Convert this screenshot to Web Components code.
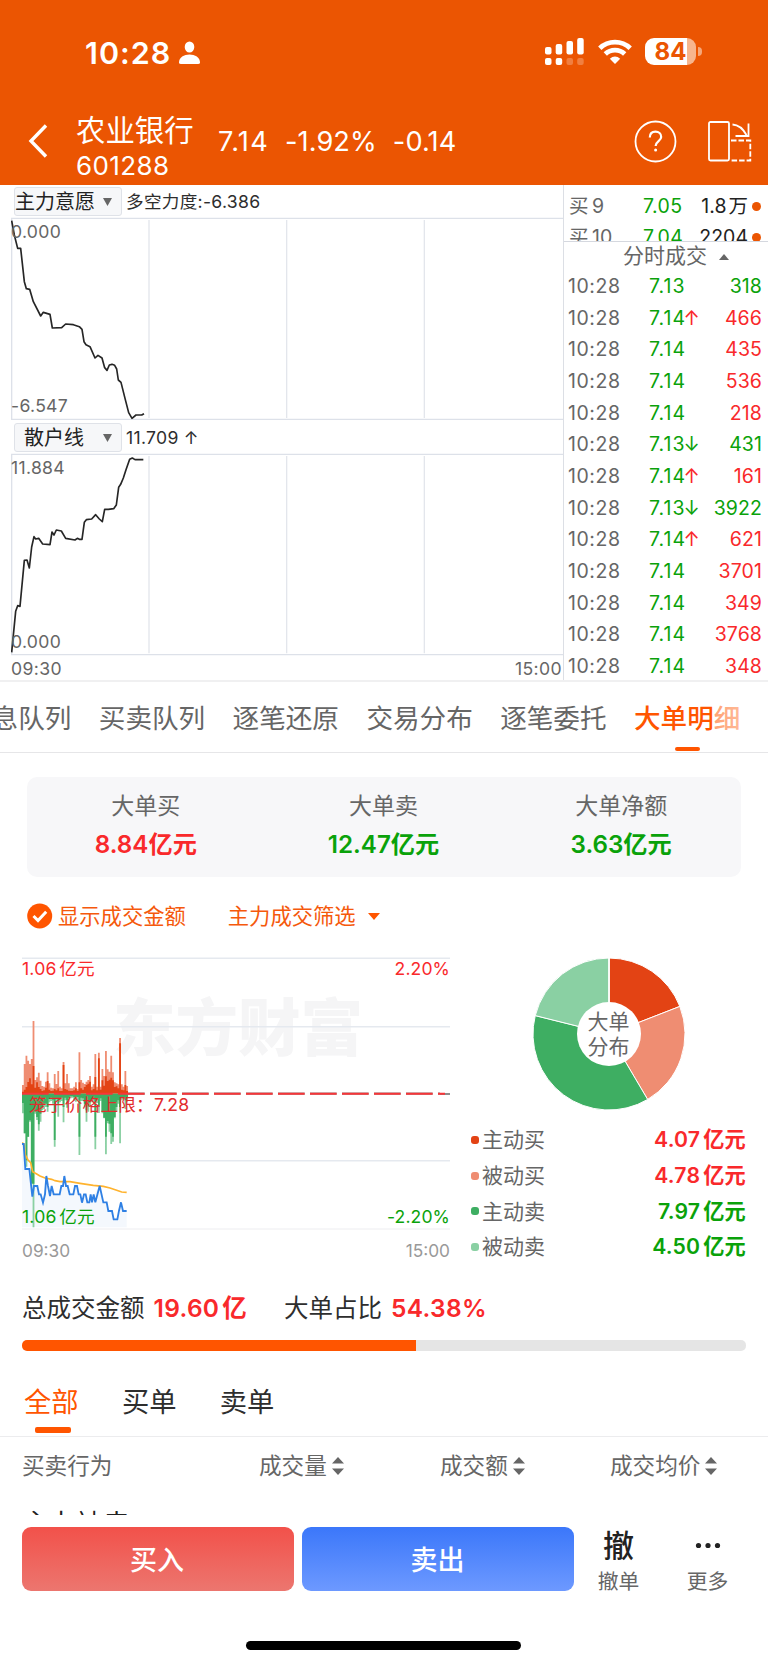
<!DOCTYPE html>
<html lang="zh-CN">
<head>
<meta charset="utf-8">
<title>农业银行 601288</title>
<style>
  :root {
    --orange: #eb5502;
    --accent: #ff5500;
    --red: #f9292b;
    --green: #0aa20a;
    --gray: #666;
    --dark: #2e2e2e;
  }
  body {
    margin: 0;
    width: 768px;
    height: 1665px;
    overflow: hidden;
    background: #fff;
    color: var(--gray);
    font-family: Inter, "Noto Sans CJK SC", sans-serif;
    white-space: nowrap;
  }
  .quote { display: flex; height: 495px; border-bottom: 2px solid #f0f0f1; }
  .flow { display: flex; height: 315px; }
</style>
</head>
<body>
<status-bar></status-bar>
<stock-header name="农业银行" code="601288"></stock-header>
<div class="quote">
  <indicator-panel></indicator-panel>
  <trade-list></trade-list>
</div>
<scroll-tabs></scroll-tabs>
<summary-card>
  <summary-item label="大单买" tone="red">8.84亿元</summary-item>
  <summary-item label="大单卖" tone="green">12.47亿元</summary-item>
  <summary-item label="大单净额" tone="green">3.63亿元</summary-item>
</summary-card>
<filter-row></filter-row>
<div class="flow">
  <money-chart></money-chart>
  <order-donut></order-donut>
</div>
<total-bar></total-bar>
<list-tabs></list-tabs>
<order-table></order-table>
<trade-footer></trade-footer>

<script>
const define = (name, render) => {
  customElements.define(name, class extends HTMLElement {
    constructor() {
      super();
      this.attachShadow({ mode: 'open' });
    }

    connectedCallback() {
      this.shadowRoot.innerHTML = render(this);
    }
  });
};

define('status-bar', () => `
  <style>
    :host { display: flex; height: 103px; background: var(--orange); color: #fff; }
    .time { margin: 33px 0 0 85px; width: 94px; height: 40px; font: 600 30.5px/40px Inter, sans-serif; letter-spacing: 1px; }
    .person { margin-top: 41px; }
    .right { margin: 38px 0 0 345px; display: flex; }
    .battery { margin-left: 13px; width: 51px; height: 27px; border-radius: 9px; color: var(--orange);
      background: linear-gradient(90deg, #fff 83%, #f7b58d 83%); font: 700 24px/28px Inter, sans-serif; text-align: center; }
    .knob { margin: 9px 0 0 2px; width: 4px; height: 9px; border-radius: 0 4px 4px 0; background: #f5a77a; }
  </style>
  <div class="time">10:28</div>
  <svg class="person" width="21" height="23" viewBox="0 0 21 23" fill="#fff">
    <ellipse cx="10.5" cy="6" rx="4.8" ry="5.6"/>
    <path d="M0 21.5C0 16.5 5 13.6 10.5 13.6S21 16.5 21 21.5Q21 23 19 23H2Q0 23 0 21.5Z"/>
  </svg>
  <div class="right">
    <svg width="39" height="27" viewBox="0 0 39 27" fill="#fff">
      <rect x="0" y="9" width="6.5" height="7.5" rx="2"/>
      <rect x="10.7" y="6" width="6.5" height="10.5" rx="2"/>
      <rect x="21.5" y="3" width="6.5" height="13.5" rx="2"/>
      <rect x="32.2" y="0" width="6.5" height="16.5" rx="2"/>
      <rect x="0" y="20" width="6.5" height="7" rx="2"/>
      <rect x="10.7" y="20" width="6.5" height="7" rx="2"/>
      <rect x="21.5" y="20" width="6.5" height="7" rx="2" opacity=".25"/>
      <rect x="32.2" y="20" width="6.5" height="7" rx="2" opacity=".25"/>
    </svg>
    <svg style="margin:1px 0 0 14px" width="34" height="26" viewBox="0 0 34 26" fill="none" stroke="#fff" stroke-width="4.8">
      <path d="M1.8 9.2A22 22 0 0 1 32.2 9.2"/>
      <path d="M7.3 15A14 14 0 0 1 26.7 15"/>
      <path d="M11.8 19.8Q17 15.2 22.2 19.8L17 25Z" fill="#fff" stroke="none"/>
    </svg>
    <div class="battery">84</div>
    <div class="knob"></div>
  </div>
`);

define('stock-header', el => `
  <style>
    :host { display: flex; height: 82px; background: var(--orange); color: #fff; }
    .back { margin: 21px 0 0 28px; }
    .title { margin-left: 28px; width: 142px; }
    .name { height: 40px; margin-top: 8px; font-size: 29.4px; line-height: 40px; }
    .code { height: 30px; font-size: 26px; line-height: 30px; letter-spacing: .4px; }
    .price { display: flex; gap: 16px; margin-top: 20px; width: 416px; font-size: 27.2px; line-height: 38px; height: 38px; letter-spacing: .1px; }
    .price span:first-of-type { letter-spacing: 1.2px; }
    .help { margin-top: 17px; }
    .rotate { margin: 18px 0 0 30px; }
  </style>
  <svg class="back" width="20" height="34" viewBox="0 0 20 34" fill="none" stroke="#fff" stroke-width="3.4"><path d="M18 1.5 3 17 18 32.5"/></svg>
  <div class="title">
    <div class="name">${el.getAttribute('name')}</div>
    <div class="code">${el.getAttribute('code')}</div>
  </div>
  <div class="price"><span>7.14</span><span>-1.92%</span><span>-0.14</span></div>
  <svg class="help" width="43" height="43" viewBox="0 0 43 43" fill="none" stroke="#fff" stroke-width="1.8">
    <circle cx="21.5" cy="21.5" r="20"/>
    <path d="M15.8 17.5C15.8 13.6 18.3 11.6 21.5 11.6S27.2 13.7 27.2 16.9C27.2 21 21.6 21.2 21.6 26" stroke-width="2.2"/>
    <circle cx="21.6" cy="30" r="1.5" fill="#fff" stroke="none"/>
  </svg>
  <svg class="rotate" width="46" height="42" viewBox="0 0 46 42" fill="none" stroke="#fff" stroke-width="1.8">
    <rect x="2" y="1" width="20" height="38.5" rx="1.5"/>
    <path d="M25.5 3.5Q34 4 39.5 14M41.5 2.5V15H28.5" stroke-width="1.8"/>
    <path d="M24 19.5H43.3V39.5H24" stroke-dasharray="5.5 2"/>
  </svg>
`);

/* one indicator: selector, latest value and its curve */
define('indicator-chart', el => {
  const at = name => el.getAttribute(name);
  const top = Number(at('top'));
  const bottom = Number(at('bottom'));
  return `
  <style>
    :host { display: block; position: relative; }
    .head { display: flex; height: 30px; padding: ${at('pad')}px 0 0 14px; align-items: flex-start; }
    .pick { box-sizing: border-box; width: 108px; height: 29px; border: 1px solid #dfe2e8; border-radius: 3px; background: #f6f7f9;
      display: flex; justify-content: space-between; padding: 0 9px 0 ${at('indent')}px; align-items: center; color: #222; font-size: 20px; line-height: 28px; }
    .value { margin-left: 4px; font-size: 17.6px; line-height: 30px; color: var(--dark); letter-spacing: .3px; }
    svg.plot { display: block; margin: 0 0 0 11px; }
    .max, .min { position: absolute; left: 11px; font-size: 17.6px; line-height: 20px; letter-spacing: .3px; }
    .max { top: ${at('maxtop')}px; }
    .min { bottom: 4px; }
  </style>
  <div class="head">
    <div class="pick"><slot></slot><svg width="9" height="8"><path d="M0 0H9L4.5 8Z" fill="#666"/></svg></div>
    <div class="value">${at('value')}</div>
  </div>
  <svg class="plot" width="552" height="203" viewBox="33 ${top} 1656 609" fill="none">
    <path d="M33 ${top + 4}H1689M33 ${bottom}H1689M35 ${top + 3}V${bottom}" stroke="#dde1e9" stroke-width="4"/>
    <path d="M447 ${top + 9}V${bottom - 4}M860 ${top + 9}V${bottom - 4}M1273 ${top + 9}V${bottom - 4}" stroke="#e3e6ec" stroke-width="4"/>
    <polyline points="${at('points')}" stroke="#262626" stroke-width="5" stroke-linejoin="round"/>
  </svg>
  <div class="max">${at('max')}</div>
  <div class="min">${at('min')}</div>`;
});

define('indicator-panel', () => `
  <style>
    :host { display: block; width: 563px; }
    .axis { display: flex; justify-content: space-between; padding: 1px 1px 0 11px; font-size: 17.6px; line-height: 24px; letter-spacing: .4px; }
  </style>
  <indicator-chart value="多空力度:-6.386" max="0.000" min="-6.547" pad="2" indent="0" maxtop="37" top="111" bottom="718"
    points="35,122 43,165 53,205 62,205 73,305 79,326 89,328 100,365 122,408 130,397 150,403 157,444 185,443 197,432 220,434 238,440 246,448 252,485 258,494 270,500 285,534 294,526 306,534 314,563 321,571 328,555 336,553 344,556 350,567 355,600 363,607 375,655 386,698 396,715 408,705 425,705 432,701">主力意愿</indicator-chart>
  <indicator-chart value="11.709 ↑" max="11.884" min="0.000" pad="3" indent="9" maxtop="38" top="130" bottom="735"
    points="35,728 47,605 53,588 60,590 73,452 81,451 88,475 95,412 102,381 107,388 116,386 128,403 150,405 156,367 162,376 169,361 184,364 197,386 225,391 232,386 238,389 246,389 253,338 259,330 275,328 287,315 298,328 307,336 314,299 325,299 341,297 349,286 356,233 362,224 370,205 378,180 389,149 397,145 405,150 430,150">散户线</indicator-chart>
  <div class="axis"><span>09:30</span><span>15:00</span></div>
`);

const trades = [
  ['7.13', '', 318, 'green'],
  ['7.14', '↑', 466, 'red'],
  ['7.14', '', 435, 'red'],
  ['7.14', '', 536, 'red'],
  ['7.14', '', 218, 'red'],
  ['7.13', '↓', 431, 'green'],
  ['7.14', '↑', 161, 'red'],
  ['7.13', '↓', 3922, 'green'],
  ['7.14', '↑', 621, 'red'],
  ['7.14', '', 3701, 'red'],
  ['7.14', '', 349, 'red'],
  ['7.14', '', 3768, 'red'],
  ['7.14', '', 348, 'red'],
];

define('trade-list', () => `
  <style>
    :host { display: block; width: 204px; border-left: 1px solid #dcdfe5; font-size: 19.5px; }
    .book { height: 56px; overflow: hidden; border-bottom: 1px solid #d5d8df; }
    .level { display: grid; grid-template-columns: 74px 1fr 62px; height: 31px; line-height: 31px; padding: 0 7px 0 5px; word-spacing: -2px; }
    .level:first-child { padding-top: 6px; }
    .level .green { letter-spacing: .4px; }
    .level b { font-weight: 400; color: #222; display: flex; justify-content: flex-end; align-items: center; gap: 4px; word-spacing: -3.5px; }
    .level i { width: 9px; height: 9px; border-radius: 50%; background: var(--orange); }
    .title { height: 29px; display: flex; align-items: center; padding-left: 59px; gap: 12px; font-size: 21px; line-height: 27px; }
    .title span { height: 29px; }
    .trade { display: grid; grid-template-columns: 81px 37px 1fr; height: 31.67px; line-height: 31.67px; padding: 0 6px 0 4px; }
    .trade > span { letter-spacing: .55px; }
    .trade > .price { letter-spacing: 1px; }
    .trade > .qty { display: flex; justify-content: space-between; letter-spacing: .1px; }
    .green { color: var(--green); }
    .red { color: var(--red); }
    .mark { margin-left: -2.5px; }
  </style>
  <div class="book">
    <div class="level"><span>买 9</span><span class="green">7.05</span><b>1.8 万<i></i></b></div>
    <div class="level"><span>买 10</span><span class="green">7.04</span><b>2204<i></i></b></div>
  </div>
  <div class="title"><span>分时成交</span><svg width="10" height="6"><path d="M0 6H10L5 0Z" fill="#666"/></svg></div>
  ${trades.map(([price, mark, qty, tone]) => `
    <div class="trade"><span>10:28</span><span class="price green">${price}</span>
      <span class="qty"><span class="mark ${mark === '↑' ? 'red' : 'green'}">${mark}</span><span class="${tone}">${qty}</span></span></div>`).join('')}
`);

define('scroll-tabs', () => `
  <style>
    :host { display: flex; height: 71px; gap: 27px; border-bottom: 1px solid #e6e6e8; box-sizing: border-box; margin-bottom: 24px; position: relative;
      overflow: hidden; font-size: 26.6px; line-height: 73px; }
    span { flex: none; width: 106.8px; }
    span:first-of-type { margin-left: -35px; }
    .on { position: relative; color: var(--accent); font-weight: 500; }
    .on::after { content: ""; position: absolute; left: 41px; top: 65px; width: 25px; height: 4px; border-radius: 2px; background: var(--accent); }
    .fade { position: absolute; right: 0; top: 0; width: 54px; height: 60px; background: linear-gradient(90deg, rgba(255,255,255,.45), rgba(255,255,255,.75)); }
  </style>
  <span>消息队列</span><span>买卖队列</span><span>逐笔还原</span><span>交易分布</span><span>逐笔委托</span><span class="on">大单明细</span>
  <div class="fade"></div>
`);

define('summary-item', el => `
  <style>
    :host { flex: 1; text-align: center; }
    .label { height: 34px; line-height: 34px; font-size: 23px; }
    .value { height: 34px; margin-top: 5px; line-height: 34px; font-size: 24.2px; font-weight: 600; color: var(--${el.getAttribute('tone')}); }
  </style>
  <div class="label">${el.getAttribute('label')}</div>
  <div class="value"><slot></slot></div>
`);

define('summary-card', () => `
  <style>
    :host { display: flex; box-sizing: border-box; width: 714px; height: 100px; margin-left: 27px; padding: 12px 1px 0 0; border-radius: 10px; background: #f7f7f9; }
  </style>
  <slot></slot>
`);

define('filter-row', () => `
  <style>
    :host { display: flex; align-items: center; height: 78px; padding-left: 27px; font-size: 21.3px; line-height: 30px; color: #f5590c; }
    .check { margin-right: 5px; }
    .arrow { margin-left: 12px; }
    .pick { margin-left: 42px; }
  </style>
  <svg class="check" width="26" height="26" viewBox="0 0 26 26"><circle cx="12.7" cy="13" r="12.5" fill="#ff5500"/><path d="M6.5 13 11 17.5 19.2 8.8" fill="none" stroke="#fff" stroke-width="3"/></svg>
  <span>显示成交金额</span>
  <span class="pick">主力成交筛选</span>
  <svg class="arrow" width="12" height="7"><path d="M0 0H12L6 7Z" fill="#ff5500"/></svg>
`);

/* per-minute amounts since 09:30, in thirds of a pixel from the zero line */
const buyAll = [26, 89, 114, 99, 89, 104, 218, 41, 49, 63, 39, 23, 21, 36, 64, 31, 18, 16, 59, 29, 68, 21, 16, 95, 31, 59, 31, 16, 16, 21, 34, 13, 124, 41, 33, 29, 36, 41, 53, 21, 28, 119, 21, 123, 21, 74, 53, 128, 73, 66, 114, 64, 34, 31, 28, 167, 28, 21, 68, 23];
const buyActive = [6, 12, 20, 35, 46, 28, 83, 18, 34, 20, 14, 8, 10, 18, 38, 12, 8, 9, 14, 10, 16, 8, 8, 86, 14, 12, 9, 8, 8, 10, 16, 8, 34, 16, 12, 20, 26, 30, 36, 10, 14, 50, 10, 106, 12, 40, 24, 52, 38, 42, 48, 40, 20, 22, 16, 151, 12, 10, 26, 8];
const sellAll = [59, 119, 219, 129, 84, 84, 401, 60, 79, 111, 84, 50, 46, 40, 54, 26, 22, 30, 159, 22, 69, 26, 22, 86, 20, 42, 24, 14, 12, 22, 24, 20, 184, 22, 22, 40, 84, 54, 36, 26, 26, 167, 28, 58, 22, 59, 74, 182, 89, 114, 151, 144, 74, 54, 30, 149, 20, 16, 46, 26];
const sellActive = [28, 119, 200, 129, 80, 270, 270, 52, 70, 92, 60, 40, 30, 30, 40, 16, 12, 18, 139, 14, 30, 16, 12, 40, 12, 20, 12, 8, 8, 10, 14, 10, 129, 12, 14, 30, 50, 38, 26, 16, 16, 129, 18, 40, 14, 52, 72, 129, 82, 90, 119, 129, 70, 40, 20, 40, 12, 10, 20, 14];
const bars = (values, dir, color) => `<path fill="${color}" d="${values.map((v, i) => `M${(66 + i * 5.3).toFixed(1)} 461v${v * dir}h5.4v${-v * dir}z`).join('')}"/>`;

define('money-chart', () => `
  <style>
    :host { display: block; position: relative; width: 428px; margin-left: 22px; font-size: 17.6px; line-height: 22px; }
    svg { display: block; }
    .mark { position: absolute; left: 91px; top: 33px; font: 900 62.5px/72px "Noto Sans CJK SC", sans-serif; color: #f5f5f6; }
    svg.plot { position: relative; }
    .tl, .tr, .bl, .br, .limit { position: absolute; }
    .tl, .tr { top: 3px; color: var(--red); }
    .bl, .br { top: 251px; color: var(--green); }
    .tl, .bl { left: 0; letter-spacing: .2px; word-spacing: -2.5px; }
    .tr, .br { right: 0; letter-spacing: .1px; }
    .limit { left: 7px; top: 139px; color: #e22b2c; letter-spacing: .25px; }
    .axis { display: flex; justify-content: space-between; margin-top: 10px; color: #999; font-size: 17.3px; }
  </style>
  <div class="mark">东方财富</div>
  <svg class="plot" width="428" height="275" viewBox="66 45 1284 825" fill="none">
    <path d="M66 55H1350M66 260H1350M66 662H1350" stroke="#e5e9ef" stroke-width="4.5"/>
    <path d="M66 867H1350" stroke="#ededf0" stroke-width="3"/>
    <path d="M66 612H71L76 687H88L97 770L102 738H112L129 788L139 708L150 768L155 738L161 763H179L193 708L209 763H220L225 738H231L246 788L252 763L268 787L299 738L310 787H320L325 813H336L341 838H352L363 787L369 813H380V862H66Z" fill="#f4f8fd"/>
    <path d="M66 461H1320" stroke="#8d8d8d" stroke-width="7" stroke-dasharray="80 16"/>
    <path d="M1320 462H1350" stroke="#8d8d8d" stroke-width="6"/>
    ${bars(buyAll, -1, '#ef8d72')}
    ${bars(buyActive, -1, '#e34314')}
    ${bars(sellAll, 1, '#8ad0a3')}
    ${bars(sellActive, 1, '#3eae62')}
    <path d="M66 461H1335" stroke="#f73538" stroke-width="6" stroke-dasharray="80 16"/>
    <polyline stroke="#ffb32e" stroke-width="5" points="66,608 72,612 76,645 84,660 92,668 98,695 110,702 120,708 135,714 155,718 165,722 180,725 210,725 240,730 280,736 310,739 330,744 350,751 365,756 380,757"/>
    <polyline stroke="#2f80e4" stroke-width="5.5" points="66,612 71,612 76,687 88,687 97,770 102,738 112,738 117,763 122,763 129,788 135,763 139,708 144,738 150,768 155,738 161,763 179,763 184,738 189,738 193,708 198,738 203,738 209,763 220,763 225,738 231,738 236,763 241,763 246,788 252,763 257,763 262,787 268,787 272,763 276,787 281,763 286,787 299,738 310,787 320,787 325,813 336,813 341,838 352,838 357,812 363,787 369,813 380,813"/>
  </svg>
  <div class="tl">1.06 亿元</div>
  <div class="tr">2.20%</div>
  <div class="limit">笼子价格上限：7.28</div>
  <div class="bl">1.06 亿元</div>
  <div class="br">-2.20%</div>
  <div class="axis"><span>09:30</span><span>15:00</span></div>
`);

const parts = [
  ['主动买', 4.07, 'red', '#e34314'],
  ['被动买', 4.78, 'red', '#ef8d72'],
  ['主动卖', 7.97, 'green', '#3eae62'],
  ['被动卖', 4.50, 'green', '#8ad0a3'],
];

const slices = () => {
  const total = parts.reduce((sum, part) => sum + part[1], 0);
  const point = a => `${(77 + 76 * Math.sin(a)).toFixed(2)} ${(77 - 76 * Math.cos(a)).toFixed(2)}`;
  let from = 0;
  return parts.map(([, value, , color]) => {
    const to = from + value / total * Math.PI * 2;
    const d = `M77 77L${point(from)}A76 76 0 0 1 ${point(to)}Z`;
    from = to;
    return `<path d="${d}" fill="${color}" stroke="#fff"/>`;
  }).join('');
};

define('order-donut', () => `
  <style>
    :host { display: block; width: 275px; margin-left: 21px; }
    .pie { position: relative; width: 154px; height: 154px; margin: 2px 0 0 61px; }
    .label { position: absolute; inset: 0 1px 0 0; display: grid; place-content: center; font-size: 21px; line-height: 25px; text-align: center; }
    ul { list-style: none; margin: 11px 0 0; padding: 0; }
    li { display: flex; align-items: center; height: 35.7px; font-size: 21px; line-height: 35px; }
    i { width: 8px; height: 8px; border-radius: 3px; margin-right: 3px; }
    b { margin-left: auto; font-weight: 600; font-size: 21.2px; letter-spacing: .2px; word-spacing: -2.5px; }
  </style>
  <div class="pie">
    <svg width="154" height="154">${slices()}<path d="M77 1V60" stroke="#fff" stroke-width="1.6"/><circle cx="77" cy="77" r="32" fill="#fff"/></svg>
    <div class="label">大单<br>分布</div>
  </div>
  <ul>
    ${parts.map(([name, value, tone, color]) => `<li><i style="background:${color}"></i>${name}<b style="color:var(--${tone})">${value.toFixed(2)} 亿元</b></li>`).join('')}
  </ul>
`);

define('total-bar', () => `
  <style>
    :host { display: block; height: 102px; padding: 0 22px; font-size: 24.5px; line-height: 36px; color: var(--dark); }
    .text { display: flex; height: 36px; padding-top: 20px; }
    b { margin: 0 37px 0 9px; font-weight: 600; color: var(--red); letter-spacing: .3px; word-spacing: -3.5px; }
    .bar { margin-top: 14px; height: 11px; border-radius: 5px; background: linear-gradient(90deg, var(--accent) 54.38%, #e5e5e5 54.38%); }
  </style>
  <div class="text"><span>总成交金额</span><b>19.60 亿</b><span>大单占比</span><b>54.38%</b></div>
  <div class="bar"></div>
`);

define('list-tabs', () => `
  <style>
    :host { display: flex; box-sizing: border-box; height: 65px; padding-left: 24px; gap: 43.3px; border-bottom: 1px solid #ececee; font-size: 27.3px; line-height: 61px; color: var(--dark); }
    .on { position: relative; color: var(--accent); }
    .on::after { content: ""; position: absolute; left: 11px; bottom: 3px; width: 36px; height: 6px; border-radius: 2px; background: var(--accent); }
  </style>
  <span class="on">全部</span><span>买单</span><span>卖单</span>
`);

define('sort-mark', () => `
  <style>:host { display: block; margin-left: 5px; }</style>
  <svg width="12" height="18" viewBox="0 0 12 18" style="display:block" fill="#666"><path d="M0 6.5H12L6 0ZM0 11.5H12L6 18Z"/></svg>
`);

define('order-table', () => `
  <style>
    :host { display: block; height: 78px; overflow: hidden; }
    .head { display: flex; padding-left: 22px; height: 58px; font-size: 22.6px; line-height: 58px; }
    .head div { display: flex; align-items: center; }
    .row { padding: 11px 0 0 22px; font-size: 27px; line-height: 38px; color: #222; }
  </style>
  <div class="head">
    <div style="width:237px">买卖行为</div>
    <div style="width:181px">成交量<sort-mark></sort-mark></div>
    <div style="width:170px">成交额<sort-mark></sort-mark></div>
    <div>成交均价<sort-mark></sort-mark></div>
  </div>
  <div class="row">主力被卖</div>
`);

define('trade-footer', () => `
  <style>
    :host { display: block; padding-top: 12px; }
    .bar { display: flex; gap: 8px; padding-left: 22px; height: 114px; }
    button { width: 272px; height: 64px; padding: 0 2px 0 0; border: 0; border-radius: 9px; color: #fff; font: 500 27px/67px Inter, "Noto Sans CJK SC", sans-serif; }
    .buy { background: linear-gradient(#f2514a, #ec766f); }
    .sell { margin-left: -.5px; padding: 0; background: linear-gradient(#3b77fa, #6d99ff); }
    .tool { width: 42px; margin-left: 16px; text-align: center; font-size: 20.8px; line-height: 28px; }
    .tool + .tool { margin-left: 39px; }
    .glyph { height: 41px; font-size: 31px; line-height: 38px; font-weight: 500; color: #222; }
    .glyph svg { display: block; margin: 0 auto; }
    .home { width: 275px; height: 9px; margin: 0 0 0 246px; border-radius: 5px; background: #000; }
  </style>
  <div class="bar">
    <button class="buy">买入</button>
    <button class="sell">卖出</button>
    <div class="tool"><div class="glyph">撤</div>撤单</div>
    <div class="tool"><div class="glyph"><svg width="28" height="36" fill="#222"><circle cx="4.5" cy="18.5" r="2.6"/><circle cx="14" cy="18.5" r="2.6"/><circle cx="23.5" cy="18.5" r="2.6"/></svg></div>更多</div>
  </div>
  <div class="home"></div>
`);
</script>
</body>
</html>
